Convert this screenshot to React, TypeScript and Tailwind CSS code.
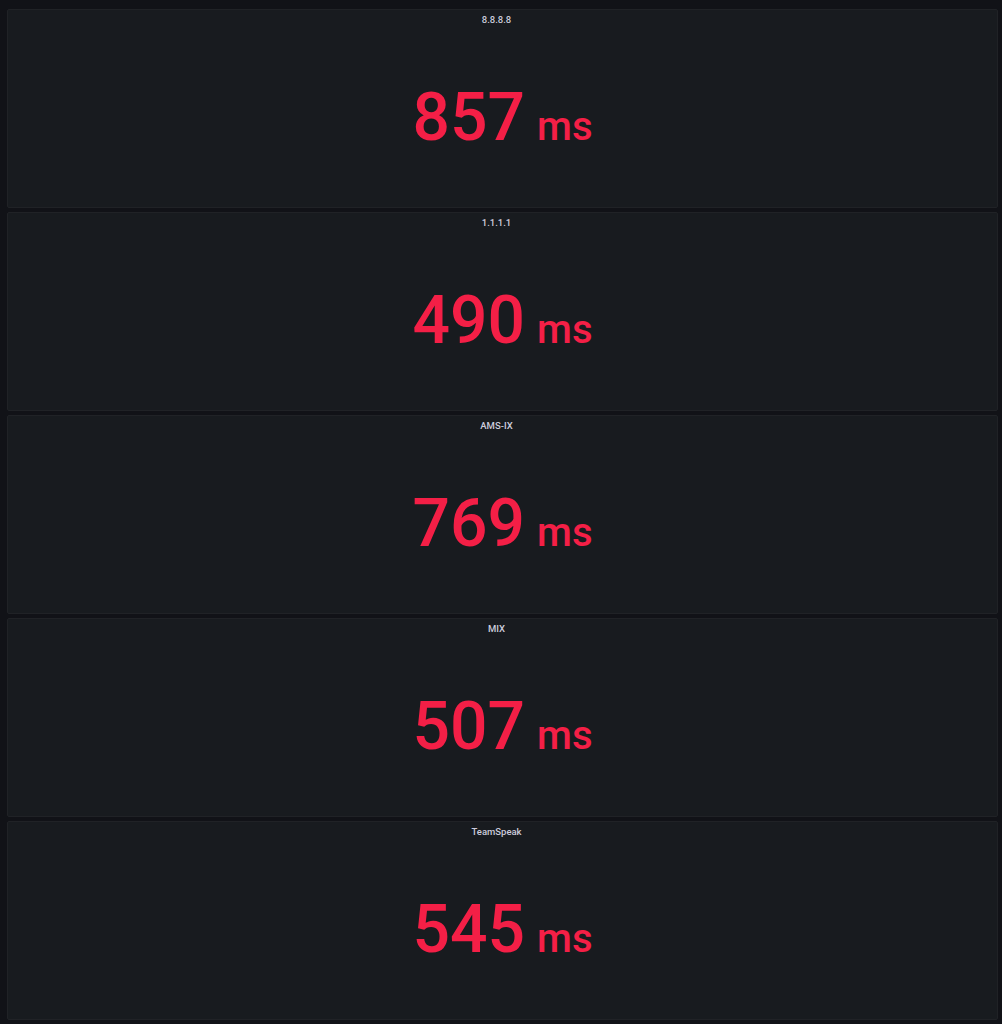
const panels = [
  { title: "8.8.8.8", value: 857 },
  { title: "1.1.1.1", value: 490 },
  { title: "AMS-IX", value: 769 },
  { title: "MIX", value: 507 },
  { title: "TeamSpeak", value: 545 },
];

function StatPanel({ title, value }: { title: string; value: number }) {
  return (
    <section className="flex h-[199px] flex-col rounded-[2px] border border-[#202226] bg-[#181b1f]">
      <h2 className="pr-[12px] pt-[3px] text-center text-[9.5px] font-medium leading-[14px] text-[#ccccdc]">
        {title}
      </h2>
      <div className="flex flex-1 items-center justify-center pt-[2px]">
        <span className="flex items-baseline gap-[12px] font-medium text-[#f41f46]">
          <span className="text-[66px] leading-none">{value}</span>
          <span className="text-[40px] leading-none">ms</span>
        </span>
      </div>
    </section>
  );
}

export default function App() {
  return (
    <main
      className="flex min-h-[1024px] flex-col gap-[4px] bg-[#111217] pb-[4px] pl-[7px] pr-[4px] pt-[9px]"
      style={{ fontFamily: "Roboto, 'Liberation Sans', sans-serif" }}
    >
      {panels.map((p) => (
        <StatPanel key={p.title} title={p.title} value={p.value} />
      ))}
    </main>
  );
}
